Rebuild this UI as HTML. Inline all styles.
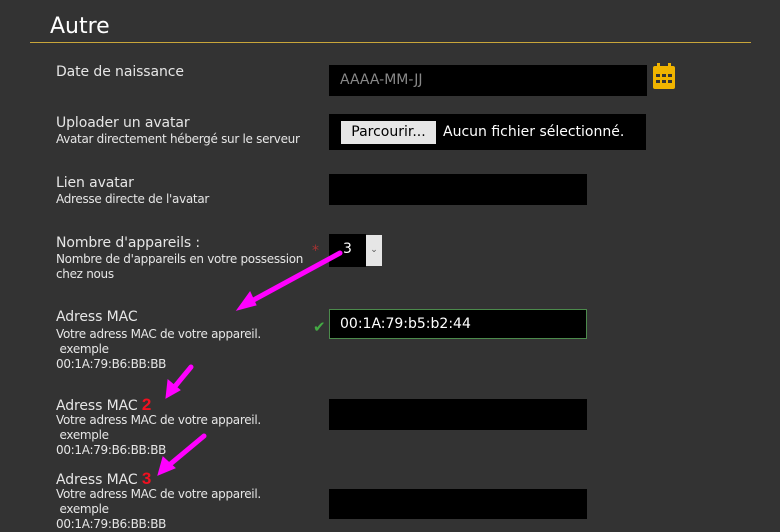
<!DOCTYPE html>
<html><head><meta charset="utf-8"><style>
body{margin:0;width:780px;height:531px;background:#333;overflow:hidden;position:relative;font-family:"DejaVu Sans","Liberation Sans",sans-serif;color:#e6e6e6}
.a{position:absolute;white-space:nowrap}
.l{font-size:14px;letter-spacing:-0.1px}
.s{font-size:12px;letter-spacing:-0.3px;line-height:15px}
.b{position:absolute;background:#000}
</style></head><body>
<div class="a" style="left:50px;top:14px;font-size:22px;color:#fff">Autre</div>
<div class="b" style="left:30px;top:42px;width:721px;height:1px;background:#c9a63a"></div>

<div class="a l" style="left:56px;top:64px">Date de naissance</div>
<div class="b" style="left:329px;top:65px;width:318px;height:31px"></div>
<div class="a" style="left:340px;top:72px;font-size:14px;color:#888">AAAA-MM-JJ</div>
<svg class="a" style="left:652px;top:63px" width="24" height="27" viewBox="0 0 24 27"><rect x="5" y="0" width="3" height="5" fill="#f0b400"/><rect x="16" y="0" width="3" height="5" fill="#f0b400"/><rect x="1" y="3" width="22" height="23" rx="2" fill="#f0b400"/><g fill="#333"><rect x="4" y="11" width="4" height="3"/><rect x="10" y="11" width="4" height="3"/><rect x="16" y="11" width="4" height="3"/><rect x="4" y="17" width="4" height="3"/><rect x="10" y="17" width="4" height="3"/><rect x="16" y="17" width="4" height="3"/></g></svg>

<div class="a l" style="left:56px;top:115px">Uploader un avatar</div>
<div class="a s" style="left:56px;top:132px">Avatar directement hébergé sur le serveur</div>
<div class="b" style="left:329px;top:114px;width:317px;height:36px"></div>
<div class="a" style="left:341px;top:121px;width:95px;height:23px;background:#e6e6e6;color:#000;font-size:14px;text-align:center;line-height:23px">Parcourir...</div>
<div class="a" style="left:443px;top:124px;font-size:14px;color:#fff">Aucun fichier sélectionné.</div>

<div class="a l" style="left:56px;top:175px">Lien avatar</div>
<div class="a s" style="left:56px;top:192px">Adresse directe de l'avatar</div>
<div class="b" style="left:329px;top:174px;width:258px;height:31px"></div>

<div class="a l" style="left:56px;top:235px">Nombre d'appareils :</div>
<div class="a s" style="left:56px;top:252px">Nombre de d'appareils en votre possession<br>chez nous</div>
<div class="a" style="left:312px;top:243px;color:#a33;font-size:14px">*</div>
<div class="b" style="left:329px;top:234px;width:37px;height:33px"></div>
<div class="a" style="left:343px;top:241px;font-size:14px;color:#fff">3</div>
<div class="a" style="left:366px;top:235px;width:16px;height:31px;background:#e6e6e6;color:#555;font-size:9px;text-align:center;line-height:31px">&#8964;</div>

<div class="a l" style="left:56px;top:309px">Adress MAC</div>
<div class="a s" style="left:56px;top:327px">Votre adress MAC de votre appareil.<br>&nbsp;exemple<br>00:1A:79:B6:BB:BB</div>
<div class="a" style="left:313px;top:318px;color:#4a4;font-size:15px">&#10004;</div>
<div class="b" style="left:329px;top:309px;width:256px;height:28px;border:1px solid #4c8a4c"></div>
<div class="a" style="left:340px;top:316px;font-size:14px;color:#fff">00:1A:79:b5:b2:44</div>

<div class="a l" style="left:56px;top:395px">Adress MAC <b style="color:#f01020;font-size:17px;font-family:'Liberation Sans',sans-serif">2</b></div>
<div class="a s" style="left:56px;top:413px">Votre adress MAC de votre appareil.<br>&nbsp;exemple<br>00:1A:79:B6:BB:BB</div>
<div class="b" style="left:329px;top:399px;width:258px;height:31px"></div>

<div class="a l" style="left:56px;top:469px">Adress MAC <b style="color:#f01020;font-size:17px;font-family:'Liberation Sans',sans-serif">3</b></div>
<div class="a s" style="left:56px;top:487px">Votre adress MAC de votre appareil.<br>&nbsp;exemple<br>00:1A:79:B6:BB:BB</div>
<div class="b" style="left:329px;top:489px;width:258px;height:30px"></div>

<svg class="a" style="left:0;top:0" width="780" height="531"><g stroke="#f0f" stroke-width="5" fill="#f0f" stroke-linecap="round">
<line x1="340" y1="253" x2="248" y2="303"/><polygon points="237,310 250,292 256,305" stroke-width="1"/>
<line x1="191" y1="367" x2="172" y2="390"/><polygon points="166,398 168,380 180,390" stroke-width="1"/>
<line x1="204" y1="436" x2="168" y2="466"/><polygon points="158,475 163,457 175,468" stroke-width="1"/>
</g></svg>
</body></html>
